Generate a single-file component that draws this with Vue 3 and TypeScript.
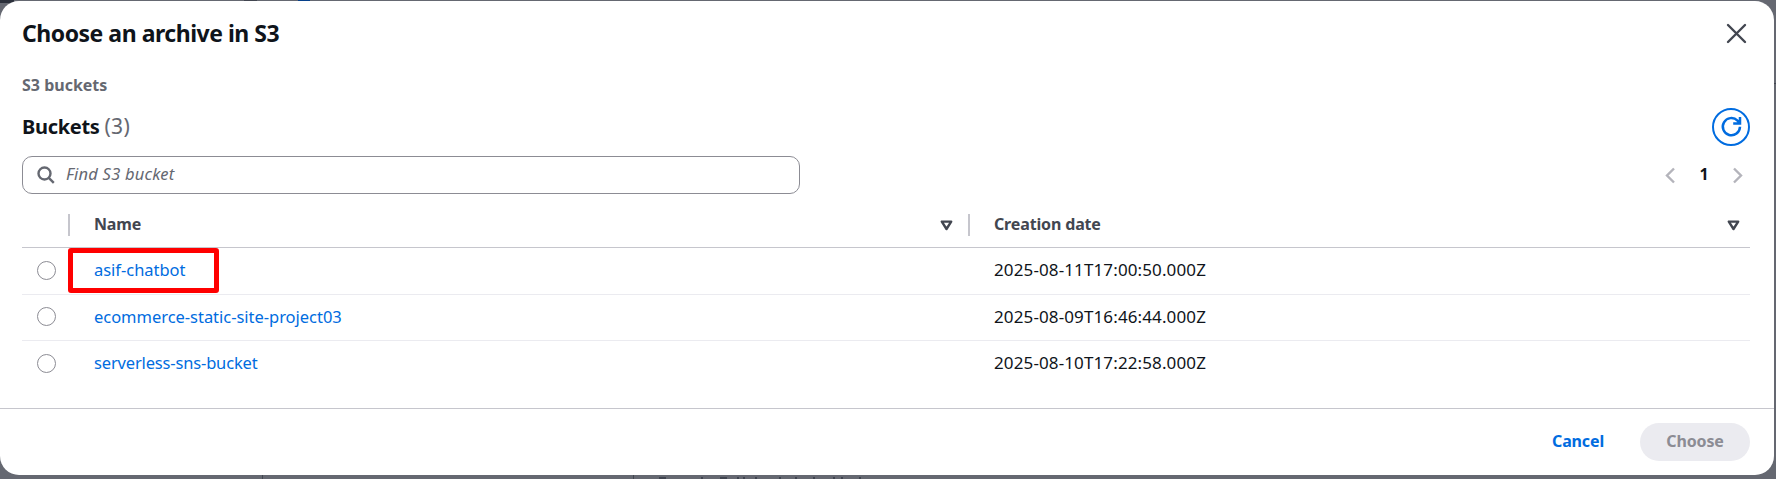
<script setup lang="ts">
interface Bucket {
  name: string
  created: string
  marked?: boolean
}

const buckets: Bucket[] = [
  { name: 'asif-chatbot', created: '2025-08-11T17:00:50.000Z', marked: true },
  { name: 'ecommerce-static-site-project03', created: '2025-08-09T16:46:44.000Z' },
  { name: 'serverless-sns-bucket', created: '2025-08-10T17:22:58.000Z' },
]
</script>

<template>
  <div class="page">
    <i class="speck top-a"></i>
    <i class="speck top-b"></i>
    <i class="speck top-c"></i>
    <i class="speck line-a"></i>
    <i class="speck line-b"></i>
    <i class="speck side"></i>
    <svg class="behind" width="204" height="2" viewBox="0 0 204 2">
      <path d="M0 1h7M42 1h2M61 1h7M78 1h2M84 1h2M96 1h2M120 1h2M136 1h2M154 1h2M174 1h2M182 1h2M200 1h2" />
    </svg>
    <section class="modal" role="dialog">
      <header class="modal-head">
        <h1>Choose an archive in S3</h1>
        <button class="plain close" aria-label="Close">
          <svg width="21" height="21" viewBox="0 0 21 21"><path d="M2 2l17 17M19 2l-17 17" /></svg>
        </button>
      </header>

      <div class="crumb">S3 buckets</div>

      <div class="title-row">
        <h2>Buckets <span>(3)</span></h2>
        <button class="plain refresh" aria-label="Refresh">
          <svg width="38" height="38" viewBox="0 0 38 38">
            <circle cx="19" cy="19" r="18" />
            <path class="arrow" d="M28 18.8A8.6 8.6 0 1 1 25.5 12.6L28 15.2M28 9v6.4h-6.8" />
          </svg>
        </button>
      </div>

      <div class="tools">
        <label class="search">
          <svg width="18" height="18" viewBox="0 0 18 18"><circle cx="7.5" cy="7.5" r="6" /><path d="M11.8 11.8l5 5" /></svg>
          <span>Find S3 bucket</span>
        </label>
        <nav class="pager">
          <svg width="10" height="17" viewBox="0 0 10 17"><path d="M9 1.5l-7 7 7 7" /></svg>
          <b>1</b>
          <svg width="10" height="17" viewBox="0 0 10 17"><path d="M1 1.5l7 7-7 7" /></svg>
        </nav>
      </div>

      <div class="table">
        <div class="row head">
          <div class="pick"></div>
          <div v-for="title in ['Name', 'Creation date']" :key="title" class="cell">
            <span>{{ title }}</span>
            <svg width="13" height="11" viewBox="0 0 13 11"><path d="M1.8 1.6h9.4L6.5 9z" /></svg>
          </div>
        </div>
        <div v-for="b in buckets" :key="b.name" class="row item">
          <div class="pick"><span class="radio"></span></div>
          <div class="cell">
            <a>{{ b.name }}</a>
            <i v-if="b.marked" class="marker"></i>
          </div>
          <div class="cell date">{{ b.created }}</div>
        </div>
      </div>

      <footer>
        <button class="plain cancel">Cancel</button>
        <button class="plain choose">Choose</button>
      </footer>
    </section>
  </div>
</template>

<style>
html, body { margin: 0; overflow: hidden; }
</style>

<style scoped>
* { box-sizing: border-box; }
.page {
  position: relative;
  height: 479px;
  padding: 1px 2px 4px 0;
  overflow: hidden;
  background: #656871;
  color: #0f141a;
  font-family: "Noto Sans", "Open Sans", sans-serif;
}
.speck { position: absolute; background: #424650; }
.top-a { left: 244px; top: 0; width: 13px; height: 1px; }
.top-b { left: 298px; top: 0; width: 12px; height: 1px; background: #06408a; }
.top-c { left: 0; top: 0; width: 14px; height: 3px; background: #2b303b; }
.line-a { left: 262px; bottom: 0; width: 1px; height: 4px; }
.line-b { left: 633px; bottom: 0; width: 1px; height: 4px; }
.side { right: 0; top: 83px; width: 2px; height: 1px; }
.behind { position: absolute; left: 659px; bottom: 0; stroke: #3f4450; stroke-width: 2; }
.modal {
  position: relative;
  height: 474px;
  display: flex;
  flex-direction: column;
  background: #fff;
  border-radius: 19px;
  overflow: hidden;
}
.plain { padding: 0; border: 0; background: none; font: inherit; }
svg { display: block; fill: none; }
h1, h2 { margin: 0; }
.modal-head {
  display: flex;
  align-items: center;
  justify-content: space-between;
  height: 64px;
  padding: 0 27px 0 22px;
}
h1 { font-size: 23px; line-height: 30px; letter-spacing: -.48px; }
.close svg { stroke: #424650; stroke-width: 2.4; stroke-linecap: round; }
.crumb {
  height: 40px;
  padding-left: 22px;
  color: #656871;
  font-size: 16px;
  font-weight: 700;
  line-height: 40px;
}
.title-row {
  display: flex;
  justify-content: space-between;
  height: 46px;
  padding: 3px 24px 0 22px;
}
h2 { font-size: 20px; line-height: 36px; letter-spacing: -.3px; }
h2 span { color: #656871; font-size: 21px; font-weight: 400; letter-spacing: .3px; }
.refresh { height: 38px; }
.refresh svg { stroke: #006ce0; stroke-width: 2; }
.refresh .arrow { stroke-width: 2.5; }
.tools {
  display: flex;
  justify-content: space-between;
  height: 52px;
  padding: 5px 31px 0 22px;
}
.search {
  display: flex;
  align-items: center;
  gap: 11px;
  width: 778px;
  height: 38px;
  padding-left: 14px;
  border: 1px solid #8c8c94;
  border-radius: 10px;
  color: #656871;
  font-size: 16.5px;
  font-style: italic;
  letter-spacing: .22px;
}
.search span { margin-top: -4px; }
.search svg { stroke: #656871; stroke-width: 2.4; }
.pager { display: flex; align-items: center; height: 38px; color: #0f141a; font-size: 16px; }
.pager svg { stroke: #b4b4bb; stroke-width: 2.4; }
.pager b { width: 58px; text-align: center; margin-top: -2px; }
.table { margin: 0 24px 0 22px; }
.row { display: grid; grid-template-columns: 48px 900px 780px; }
.head { height: 45px; border-bottom: 1px solid #c6c6cd; }
.head .pick, .head .cell:nth-child(2) {
  background: linear-gradient(#c6c6cd, #c6c6cd) right 11px / 2px 22px no-repeat;
}
.head .pick, .head .cell { height: 42px; }
.head .cell {
  justify-content: space-between;
  padding-right: 10px;
  color: #424650;
  font-size: 16px;
  font-weight: 700;
  letter-spacing: -.15px;
  line-height: 42px;
}
.cell { position: relative; display: flex; align-items: center; padding-left: 24px; }
.head .cell:nth-child(2) { padding-right: 17px; }
.head svg { stroke: #424650; stroke-width: 2.4; stroke-linejoin: round; margin-top: 3px; }
.item { height: 46px; border-bottom: 1px solid #ebebf0; }
.item:nth-child(2) { height: 47px; }
.item:last-child { border-bottom: 0; }
.pick { display: flex; align-items: center; padding: 0 0 1px 15px; }
.item:nth-child(3) .pick { padding-bottom: 2px; }
.radio { width: 19px; height: 19px; border: 1.5px solid #8c8c94; border-radius: 50%; }
.item .cell { padding-bottom: 3px; }
.item:nth-child(3) .cell { padding-bottom: 2px; }
a { color: #006ce0; font-size: 16.5px; letter-spacing: -.03px; }
.item:nth-child(4) a { letter-spacing: -.16px; }
.date { font-size: 17px; letter-spacing: .12px; }
.marker {
  position: absolute;
  left: -2px;
  top: 0;
  width: 151px;
  height: 45px;
  border: 5px solid #f00;
  border-radius: 3px;
}
footer {
  display: flex;
  align-items: center;
  justify-content: flex-end;
  gap: 36px;
  height: 67px;
  margin-top: auto;
  padding-right: 24px;
  border-top: 1px solid #c6c6cd;
}
footer .plain { height: 38px; padding-bottom: 2px; font-size: 16px; font-weight: 700; letter-spacing: -.15px; }
.cancel { color: #006ce0; }
.choose { width: 110px; border-radius: 19px; background: #ebebf0; color: #8c8c94; }
</style>
